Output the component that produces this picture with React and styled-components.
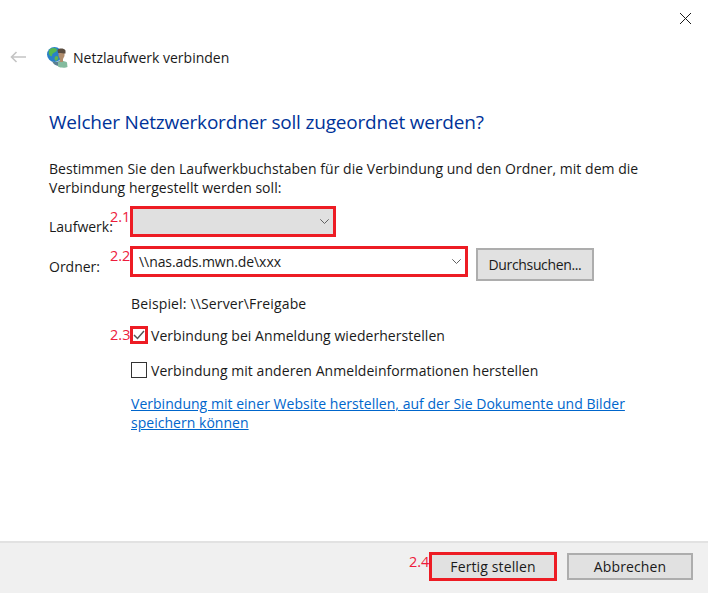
import React from 'react';
import styled, { createGlobalStyle } from 'styled-components';

const GlobalStyle = createGlobalStyle`
  html, body {
    margin: 0;
    padding: 0;
    background: #fff;
  }
  body {
    font-family: 'Open Sans', 'Noto Sans', sans-serif;
    font-size: 14px;
    color: #1a1a1a;
  }
`;

const Dialog = styled.div`
  width: 708px;
  height: 593px;
  display: flex;
  flex-direction: column;
  overflow: hidden;
  background: #fff;
`;

const TitleBar = styled.div`
  height: 38px;
  display: flex;
  justify-content: flex-end;
  padding: 12px 16px 0 0;
  box-sizing: border-box;
`;

const HeaderRow = styled.div`
  display: flex;
  align-items: center;
  gap: 20px;
  height: 38px;
  padding-left: 10px;
`;

const HeaderTitle = styled.div`
  display: flex;
  align-items: center;
  gap: 5px;
  font-size: 14px;
`;

const Content = styled.div`
  flex: 1;
  padding: 32px 0 0 49px;
`;

const Heading = styled.h1`
  margin: 0;
  font-size: 19px;
  line-height: 28px;
  font-weight: 400;
  color: #003399;
  letter-spacing: -0.19px;
`;

const Intro = styled.p`
  margin: 23px 0 0;
  width: 610px;
  line-height: 19px;
  letter-spacing: 0.03px;
`;

const Form = styled.div`
  display: grid;
  grid-template-columns: 81px 1fr;
  row-gap: 9px;
  margin-top: 9px;
  align-items: start;
`;

const Label = styled.span`
  line-height: 19px;
  padding-top: 11px;
`;

const ControlRow = styled.div`
  display: flex;
  align-items: flex-start;
  gap: 8px;
`;

const Marked = styled.div`
  position: relative;
  display: flex;
`;

const Step = styled.span`
  position: absolute;
  left: -20px;
  top: ${({ $top }) => $top}px;
  font-size: 14.5px;
  line-height: 16px;
  color: #ed1c3c;
  white-space: nowrap;
`;

const Combo = styled.div`
  box-sizing: border-box;
  width: ${({ $width }) => $width}px;
  height: 31px;
  border: 3px solid #ed1c24;
  background: ${({ $disabled }) => ($disabled ? '#e0e0e0' : '#fff')};
  display: flex;
  align-items: center;
  justify-content: space-between;
  padding: 0 4px 0 6px;
  letter-spacing: -0.07px;
`;

const Button = styled.button`
  box-sizing: border-box;
  width: ${({ $width }) => $width}px;
  height: ${({ $height }) => $height}px;
  margin-top: ${({ $top }) => $top || 0}px;
  border: ${({ $marked }) => ($marked ? '3px solid #ed1c24' : '2px solid #adadad')};
  background: #e1e1e1;
  font: inherit;
  color: inherit;
  padding: 0;
  letter-spacing: ${({ $spacing }) => $spacing}px;
  display: block;
`;

const Example = styled.div`
  margin: 13px 0 0 82px;
  line-height: 19px;
  letter-spacing: 0.15px;
`;

const CheckRow = styled.div`
  display: flex;
  align-items: center;
  height: 18px;
  margin: ${({ $top }) => $top}px 0 0 81px;
  letter-spacing: 0.06px;
`;

const Check = styled.span`
  box-sizing: border-box;
  width: ${({ $marked }) => ($marked ? 18 : 16)}px;
  height: ${({ $marked }) => ($marked ? 18 : 16)}px;
  margin: 0 ${({ $marked }) => ($marked ? 3 : 4)}px 0 ${({ $marked }) => ($marked ? 0 : 1)}px;
  border: ${({ $marked }) => ($marked ? '3px solid #ed1c24' : '1px solid #333')};
  display: flex;
  align-items: center;
  justify-content: center;
  flex: none;
`;

const WebLink = styled.a`
  display: block;
  margin: 15px 0 0 82px;
  width: 520px;
  line-height: 19px;
  color: #0066cc;
  text-decoration: underline;
  letter-spacing: 0.03px;
`;

const Footer = styled.div`
  box-sizing: border-box;
  height: 52px;
  background: #f0f0f0;
  border-top: 2px solid #e2e2e2;
  display: flex;
  align-items: flex-start;
  justify-content: flex-end;
  gap: 10px;
  padding: 9px 15px 0 0;
`;

const FooterSlot = styled.div`
  display: flex;
  align-items: center;
  height: 29px;
`;

const Chevron = () => (
  <svg width="9" height="5" viewBox="0 0 9 5" fill="none">
    <path d="M0.3 0.3 L4.5 4.5 L8.7 0.3" stroke="#606060" strokeWidth="1" />
  </svg>
);

const NetworkIcon = () => (
  <svg width="21" height="21" viewBox="0 0 21 21">
    <circle cx="7.5" cy="7.5" r="7.5" fill="#2a80c8" />
    <path d="M3 2 C6 0 10 1 10 3 C9 6 5 5 5 9 C3 10 0 6 3 2 Z" fill="#56b84f" />
    <path d="M9 9 C12 9 12 12 9 14 C7 13 7 10 9 9 Z" fill="#62b54d" />
    <path d="M5 14 C8 16 12 15 13 13 V19 C9 19 6 17 5 14 Z" fill="#5a7f92" />
    <path d="M11 15 C13 13.5 18 13.5 20 15.5 L20.5 20 C19 21 13 21 11 19.5 Z" fill="#84bb9e" />
    <path d="M11.5 5 h6 v4 l-1.5 3 v3 h-3 v-3 l-1.5 -3 Z" fill="#b18d6d" />
    <path d="M10.5 3 C12 1 17 1 18.5 3.5 V6.5 H17 C15 5.5 12.5 6 11 6 Z" fill="#5a4c40" />
  </svg>
);

export default function App() {
  return (
    <Dialog>
      <GlobalStyle />
      <TitleBar>
        <svg width="13" height="13" viewBox="0 0 13 13" fill="none">
          <path d="M1 1 L12 12 M12 1 L1 12" stroke="#1a1a1a" strokeWidth="1" />
        </svg>
      </TitleBar>
      <HeaderRow>
        <svg width="17" height="12" viewBox="0 0 17 12" fill="none">
          <path d="M16 6 H1.5 M6.5 1 L1.5 6 L6.5 11" stroke="#c4c4c4" strokeWidth="1.6" />
        </svg>
        <HeaderTitle>
          <NetworkIcon />
          Netzlaufwerk verbinden
        </HeaderTitle>
      </HeaderRow>
      <Content>
        <Heading>Welcher Netzwerkordner soll zugeordnet werden?</Heading>
        <Intro>
          Bestimmen Sie den Laufwerkbuchstaben für die Verbindung und den Ordner, mit dem die
          Verbindung hergestellt werden soll:
        </Intro>
        <Form>
          <Label>Laufwerk:</Label>
          <ControlRow>
            <Marked>
              <Step $top={3}>2.1</Step>
              <Combo $width={206} $disabled>
                <span />
                <Chevron />
              </Combo>
            </Marked>
          </ControlRow>
          <Label>Ordner:</Label>
          <ControlRow>
            <Marked>
              <Step $top={2}>2.2</Step>
              <Combo $width={338}>
                <span>\\nas.ads.mwn.de\xxx</span>
                <Chevron />
              </Combo>
            </Marked>
            <Button $width={118} $height={33} $top={2} $spacing={-0.35}>Durchsuchen...</Button>
          </ControlRow>
        </Form>
        <Example>Beispiel: \\Server\Freigabe</Example>
        <CheckRow $top={13}>
          <Marked>
            <Step $top={1}>2.3</Step>
            <Check $marked>
              <svg width="12" height="10" viewBox="0 0 12 10" fill="none">
                <path d="M1 5 L4.5 8.5 L11 1" stroke="#555" strokeWidth="1.5" />
              </svg>
            </Check>
          </Marked>
          Verbindung bei Anmeldung wiederherstellen
        </CheckRow>
        <CheckRow $top={17}>
          <Check />
          Verbindung mit anderen Anmeldeinformationen herstellen
        </CheckRow>
        <WebLink>
          Verbindung mit einer Website herstellen, auf der Sie Dokumente und Bilder speichern können
        </WebLink>
      </Content>
      <Footer>
        <FooterSlot>
          <Marked>
            <Step $top={2}>2.4</Step>
            <Button $width={128} $height={29} $marked $spacing={0.12}>Fertig stellen</Button>
          </Marked>
        </FooterSlot>
        <FooterSlot>
          <Button $width={126} $height={27} $spacing={0.12}>Abbrechen</Button>
        </FooterSlot>
      </Footer>
    </Dialog>
  );
}
